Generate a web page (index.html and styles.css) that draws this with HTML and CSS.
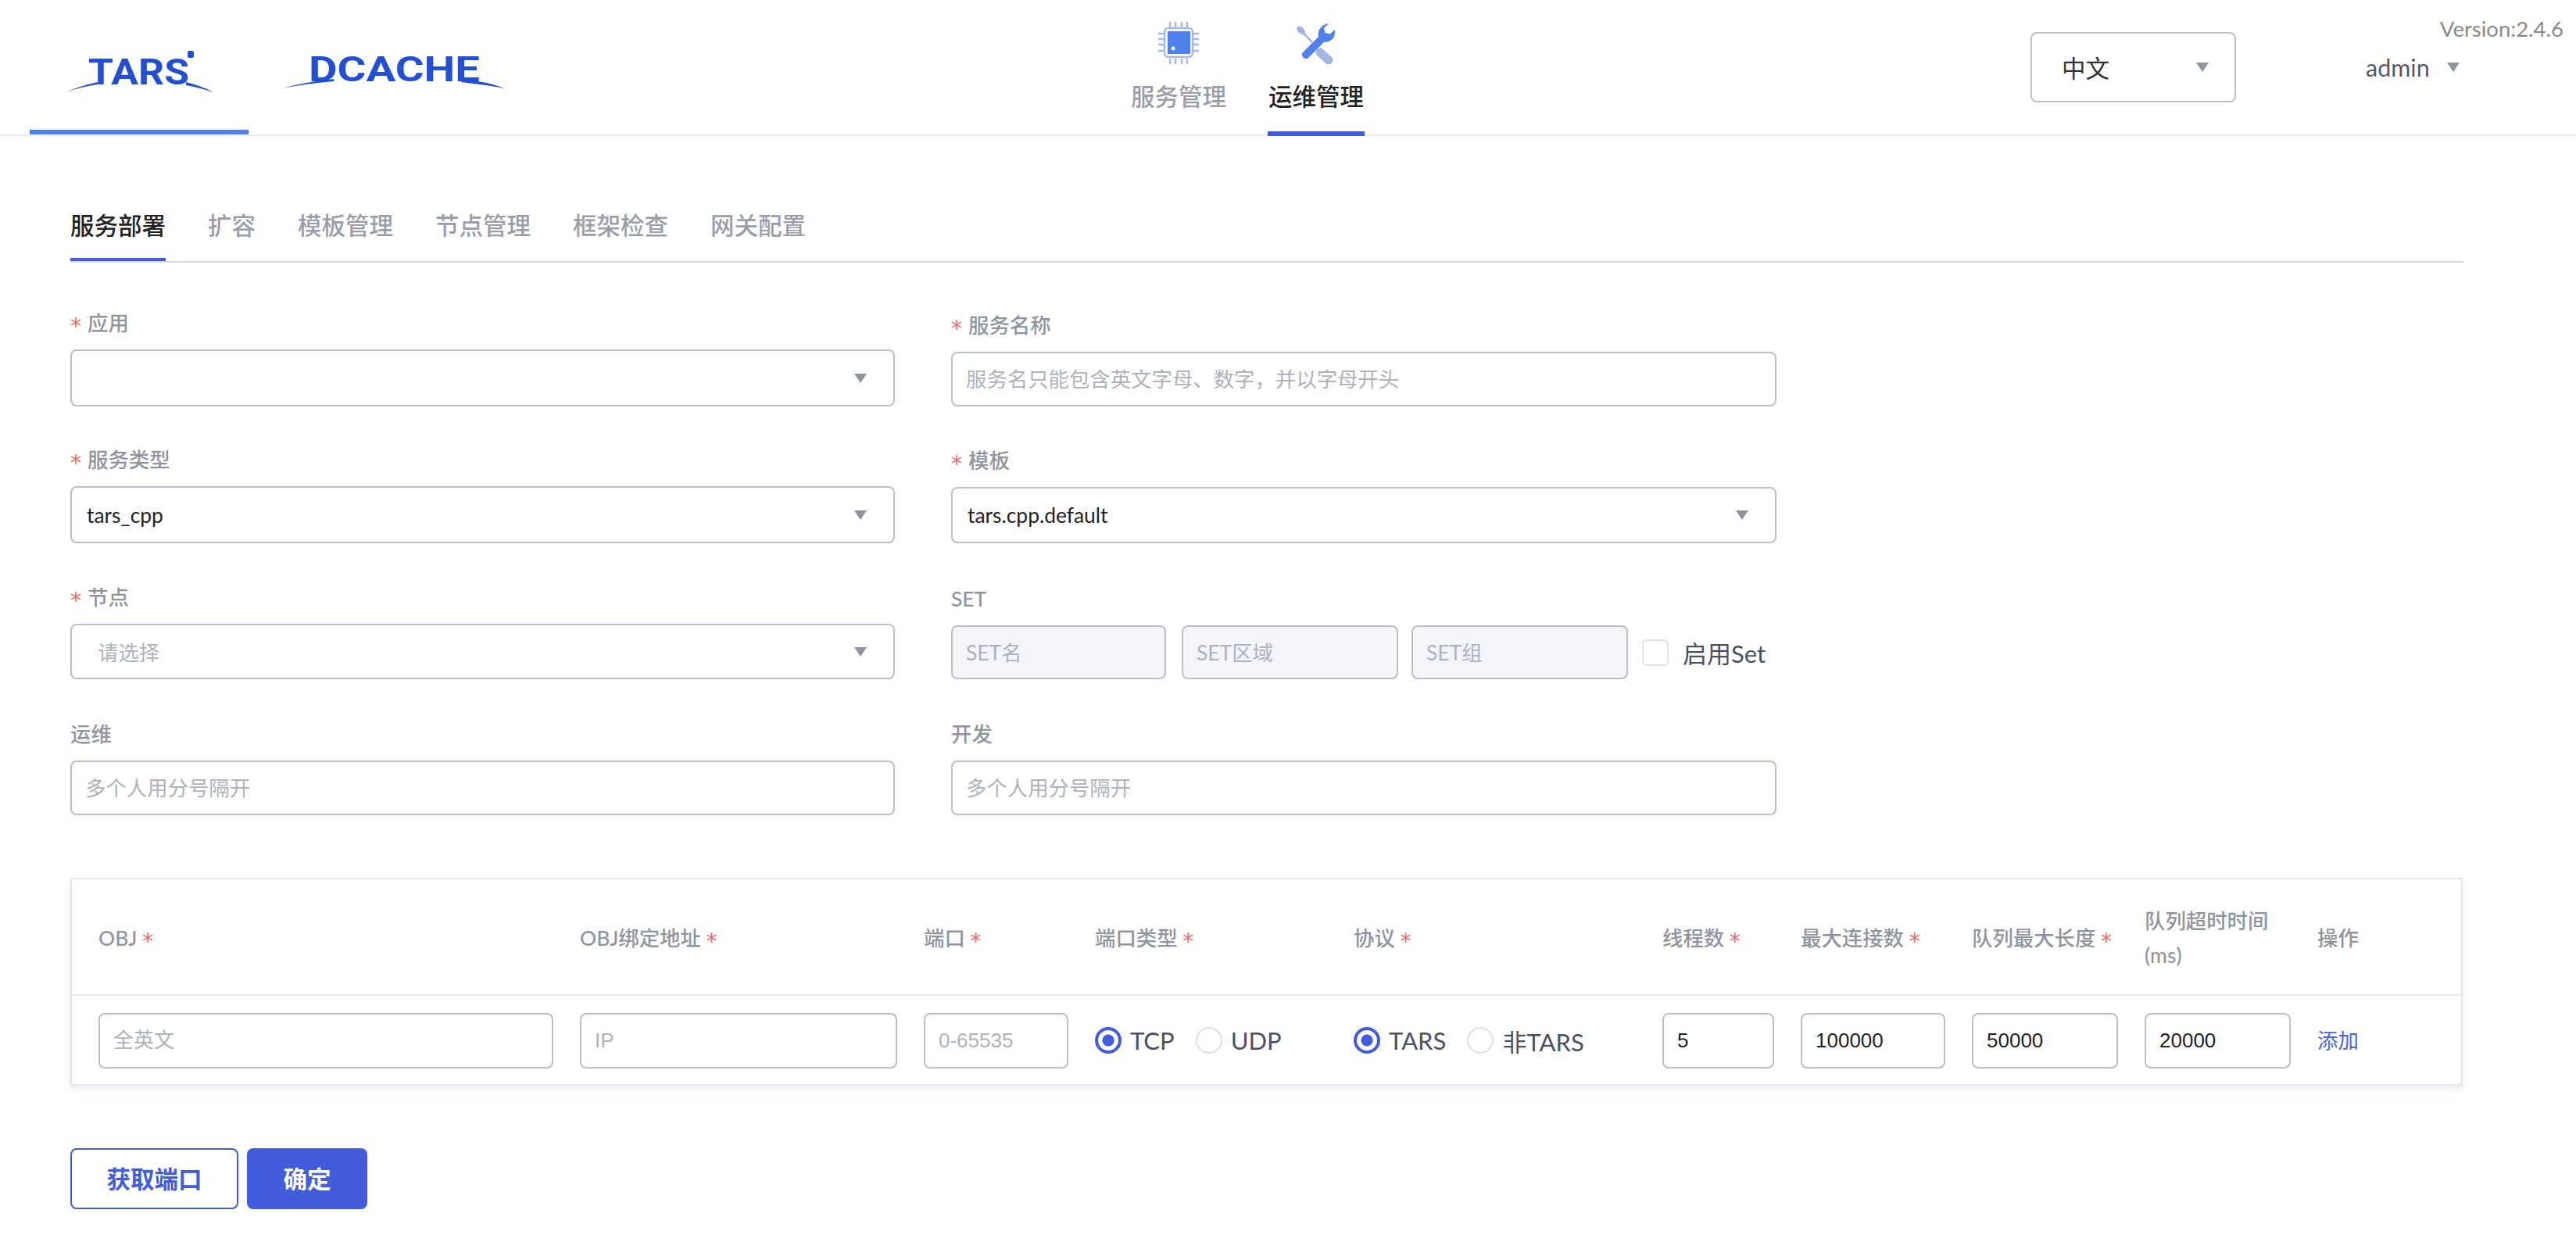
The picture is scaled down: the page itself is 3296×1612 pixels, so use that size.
FILE: index.html
```html
<!DOCTYPE html>
<html lang="zh-CN">

<head>
    <meta charset="UTF-8">
    <title>TARS</title>
    <link rel="stylesheet" href="styles.css">
</head>

<body>
    <header class="top-bar">
        <div class="logos">
            <a class="logo-tab active">
                <svg class="logo" width="280" height="70" viewBox="0 0 280 70">
                    <text class="logo-word" x="75" y="48" font-size="46" textLength="129" lengthAdjust="spacingAndGlyphs">TARS</text>
                    <rect class="logo-mark" x="202" y="5" width="8" height="9" rx="2"></rect>
                    <path class="logo-mark" d="M46 58 Q64 50 87 45 L87 48 Q66 51 46 58Z"></path>
                    <path class="logo-mark" d="M200 45 Q220 50 235 58 Q216 52 200 49Z"></path>
                </svg>
            </a>
            <a class="logo-tab second">
                <svg class="logo" width="295" height="70" viewBox="0 0 295 70">
                    <text class="logo-word" x="40" y="44" font-size="45" textLength="219" lengthAdjust="spacingAndGlyphs">DCACHE</text>
                    <path class="logo-mark" d="M7 53 Q34 45 72 41 L72 44 Q36 47 7 53Z"></path>
                    <path class="logo-mark" d="M235 41 Q266 44 291 53 Q262 48 235 45Z"></path>
                </svg>
            </a>
        </div>

        <nav class="main-nav">
            <a class="nav-item">
                <svg width="52" height="54" viewBox="0 0 52 54">
                    <g class="pin">
                        <path d="M15 0V7M22 0V7M30 0V7M37 0V7M15 47V54M22 47V54M30 47V54M37 47V54"></path>
                        <path d="M0 15H7M0 22H7M0 29H7M0 37H7M45 15H52M45 22H52M45 29H52M45 37H52"></path>
                        <rect x="8" y="8" width="36" height="37" rx="5"></rect>
                    </g>
                    <rect class="chip-core" x="12" y="12" width="29" height="29"></rect>
                    <circle cx="19" cy="34" r="2.5" fill="#fff"></circle>
                </svg>
                <span>服务管理</span>
            </a>
            <a class="nav-item active">
                <svg width="52" height="54" viewBox="0 0 52 54">
                    <ellipse class="tool-light" cx="6.7" cy="11" rx="6.5" ry="4" transform="rotate(45 6.7 11)"></ellipse>
                    <path class="tool-shaft" d="M9 14L21 26"></path>
                    <path class="tool-handle" d="M31 39L42 49"></path>
                    <path class="tool-main" d="M42 2L36 8L37.5 14L43.5 15.5L50 10C51 17 48 23 42 25C40 26 38 26 36.5 25.5L16 46A5 5 0 0 1 9 39L29 19C27 11 33 3 42 2Z"></path>
                </svg>
                <span>运维管理</span>
            </a>
        </nav>

        <div class="lang-select">
            <span>中文</span>
            <i class="caret"></i>
        </div>

        <div class="user-menu">
            <span>admin</span>
            <i class="caret"></i>
        </div>

        <div class="version">Version:2.4.6</div>
    </header>

    <main class="content">
        <div class="tabs">
            <a class="tab active">服务部署</a>
            <a class="tab">扩容</a>
            <a class="tab">模板管理</a>
            <a class="tab">节点管理</a>
            <a class="tab">框架检查</a>
            <a class="tab">网关配置</a>
        </div>

        <form class="deploy-form">
            <div class="field">
                <label class="field-label"><em>*</em>应用</label>
                <div class="select-box"><span></span><i class="caret"></i></div>
            </div>
            <div class="field">
                <label class="field-label"><em>*</em>服务名称</label>
                <input class="text-input" placeholder="服务名只能包含英文字母、数字，并以字母开头">
            </div>

            <div class="field">
                <label class="field-label"><em>*</em>服务类型</label>
                <div class="select-box"><span>tars_cpp</span><i class="caret"></i></div>
            </div>
            <div class="field">
                <label class="field-label"><em>*</em>模板</label>
                <div class="select-box tight"><span>tars.cpp.default</span><i class="caret"></i></div>
            </div>

            <div class="field">
                <label class="field-label"><em>*</em>节点</label>
                <div class="select-box short">
                    <span class="select-placeholder">请选择</span><i class="caret"></i>
                </div>
            </div>
            <div class="field">
                <label class="field-label">SET</label>
                <div class="set-row">
                    <input class="text-input set-input name" placeholder="SET名" disabled>
                    <input class="text-input set-input area" placeholder="SET区域" disabled>
                    <input class="text-input set-input group" placeholder="SET组" disabled>
                    <span class="check-box"></span>
                    <span class="check-text">启用Set</span>
                </div>
            </div>

            <div class="field">
                <label class="field-label">运维</label>
                <input class="text-input" placeholder="多个人用分号隔开">
            </div>
            <div class="field">
                <label class="field-label">开发</label>
                <input class="text-input" placeholder="多个人用分号隔开">
            </div>
        </form>

        <div class="obj-card">
            <table class="obj-table">
                <thead>
                    <tr>
                        <th class="col-obj">OBJ <em>*</em></th>
                        <th class="col-bind">OBJ绑定地址 <em>*</em></th>
                        <th class="col-port">端口 <em>*</em></th>
                        <th class="col-type">端口类型 <em>*</em></th>
                        <th class="col-proto">协议 <em>*</em></th>
                        <th class="col-thread">线程数 <em>*</em></th>
                        <th class="col-conn">最大连接数 <em>*</em></th>
                        <th class="col-queue">队列最大长度 <em>*</em></th>
                        <th class="col-queue">队列超时时间 (ms)</th>
                        <th>操作</th>
                    </tr>
                </thead>
                <tbody>
                    <tr>
                        <td><input class="cell-input" placeholder="全英文"></td>
                        <td><input class="cell-input" placeholder="IP"></td>
                        <td><input class="cell-input" placeholder="0-65535"></td>
                        <td>
                            <div class="radio-group">
                                <span class="radio on"></span><span class="radio-text">TCP</span>
                                <span class="radio"></span><span class="radio-text">UDP</span>
                            </div>
                        </td>
                        <td>
                            <div class="radio-group">
                                <span class="radio on"></span><span class="radio-text">TARS</span>
                                <span class="radio"></span><span class="radio-text">非TARS</span>
                            </div>
                        </td>
                        <td><input class="cell-input" value="5"></td>
                        <td><input class="cell-input" value="100000"></td>
                        <td><input class="cell-input" value="50000"></td>
                        <td><input class="cell-input" value="20000"></td>
                        <td><a class="add-link">添加</a></td>
                    </tr>
                </tbody>
            </table>
        </div>

        <div class="actions">
            <button class="btn btn-plain" type="button">获取端口</button>
            <button class="btn btn-primary" type="button">确定</button>
        </div>
    </main>
</body>

</html>
```

FILE: styles.css
```css
* {
    box-sizing: border-box;
}

body {
    margin: 0;
    background-color: #fff;
    color: #333;
    font-family: Lato, "Noto Sans CJK SC", sans-serif;
    font-size: 26.4px;
}

em {
    color: #ec6b6b;
    font-family: "DejaVu Sans", sans-serif;
    font-size: 28px;
    font-style: normal;
    font-weight: 400;
    line-height: 0;
    vertical-align: -4px;
}

/* 顶部导航 */
.top-bar {
    position: relative;
    display: flex;
    height: 174px;
    padding-left: 38px;
    border-bottom: 2px solid #ebedf0;
}

.logos {
    display: flex;
}

.logo-tab {
    display: block;
    width: 280px;
    height: 172px;
    padding-top: 60px;
}

.logo-tab.active {
    border-bottom: 6px solid #4f80ec;
}

.logo-tab.second {
    width: 295px;
    margin-left: 37px;
}

.logo {
    display: block;
}

.logo-word {
    fill: #2350d2;
    font-family: Roboto, sans-serif;
    font-weight: 700;
}

.logo-mark {
    fill: #2350d2;
}

.main-nav {
    display: flex;
    gap: 52px;
    margin-left: 796px;
    height: 174px;
}

.nav-item {
    display: flex;
    flex-direction: column;
    align-items: center;
    width: 124px;
    height: 174px;
    padding-top: 28px;
    color: #9a9eab;
    font-size: 30.5px;
    font-weight: 500;
}

.nav-item span {
    margin-top: 19px;
    line-height: 44px;
}

.nav-item.active {
    color: #222;
    border-bottom: 6px solid #415dd9;
}

.pin {
    fill: none;
    stroke: #a6b9e6;
    stroke-width: 2.5;
}

.chip-core {
    fill: #4f80ec;
}

.tool-light {
    fill: #a3b6e3;
}

.tool-shaft {
    stroke: #a3b6e3;
    stroke-width: 2.5;
}

.tool-handle {
    stroke: #a3b6e3;
    stroke-width: 11;
    stroke-linecap: round;
}

.tool-main {
    fill: #4f80ec;
}

.caret {
    display: block;
    width: 0;
    height: 0;
    border-left: 8px solid transparent;
    border-right: 8px solid transparent;
    border-top: 12px solid #8f93a0;
}

.lang-select {
    display: flex;
    align-items: center;
    justify-content: space-between;
    align-self: center;
    width: 263px;
    height: 90px;
    margin-left: 852px;
    padding: 0 33px 0 38px;
    border: 2px solid #bfc2cc;
    border-radius: 8px;
    color: #333;
    font-size: 30.5px;
}

.user-menu {
    display: flex;
    align-items: center;
    gap: 22px;
    align-self: center;
    margin-left: 166px;
    color: #555a68;
    font-size: 30.5px;
}

.version {
    position: absolute;
    top: 20px;
    right: 16px;
    color: #8a8a8a;
    font-size: 27.5px;
}

/* 内容区 */
.content {
    padding: 0 144px 0 90px;
}

.tabs {
    display: flex;
    gap: 54px;
    height: 162px;
    padding-top: 92px;
    border-bottom: 2px solid #d8dae0;
}

.tab {
    height: 68px;
    color: #9a9eab;
    font-size: 30.5px;
    font-weight: 500;
    line-height: 44px;
}

.tab.active {
    color: #222;
    border-bottom: 4px solid #415dd9;
}

.deploy-form {
    display: grid;
    grid-template-columns: 1055px 1056px;
    grid-template-rows: 184px 175px 174px 174px;
    column-gap: 72px;
    align-items: end;
}

.field-label {
    display: block;
    margin-bottom: 12px;
    color: #8f94a1;
    font-size: 26.4px;
    font-weight: 500;
    line-height: 44px;
}

.field-label em {
    margin-right: 8px;
}

.select-box {
    display: flex;
    align-items: center;
    justify-content: space-between;
    height: 73px;
    padding: 0 34px 0 19px;
    border: 2px solid #bcbfca;
    border-radius: 8px;
    color: #222;
}

.select-box.tight {
    height: 72px;
}

.select-box.short {
    height: 71px;
}

.select-placeholder {
    margin-left: 14px;
    color: #aeb2be;
}

.text-input {
    display: block;
    width: 100%;
    height: 70px;
    padding: 0 17px;
    border: 2px solid #bcbfca;
    border-radius: 8px;
    background-color: #fff;
    font-family: inherit;
    font-size: 26.4px;
    outline: none;
}

.text-input::placeholder,
.cell-input::placeholder {
    color: #aeb2be;
    opacity: 1;
}

.set-row {
    display: flex;
    align-items: center;
}

.set-input {
    height: 69px;
    background-color: #f4f5fa;
}

.set-input.name {
    width: 275px;
    margin-right: 20px;
}

.set-input.area {
    width: 277px;
    margin-right: 17px;
}

.set-input.group {
    width: 277px;
    margin-right: 18px;
}

.check-box {
    width: 34px;
    height: 34px;
    border: 2px solid #dfe1e8;
    border-radius: 6px;
}

.check-text {
    margin-left: 18px;
    color: #4a5060;
    font-size: 31px;
}

/* OBJ 表格 */
.obj-card {
    width: 3061px;
    margin-top: 80px;
    border: 2px solid #e6e7ec;
    box-shadow: 0 4px 8px rgba(60, 70, 100, 0.12);
}

.obj-table {
    width: 100%;
    border-collapse: collapse;
    table-layout: fixed;
}

.obj-table th {
    height: 148px;
    padding: 2px 17px 0;
    border-bottom: 2px solid #e6e7ec;
    color: #8f94a1;
    font-size: 26.4px;
    font-weight: 500;
    line-height: 44px;
    text-align: left;
}

.obj-table td {
    height: 114px;
    padding: 1px 17px 0;
}

.obj-table th:first-child,
.obj-table td:first-child {
    padding-left: 34px;
}

.col-obj { width: 633px; }
.col-bind { width: 440px; }
.col-port { width: 219px; }
.col-type { width: 331px; }
.col-proto { width: 395px; }
.col-thread { width: 177px; }
.col-conn { width: 219px; }
.col-queue { width: 221px; }

.cell-input {
    display: block;
    width: 100%;
    height: 71px;
    padding: 0 17px;
    border: 2px solid #bcbfca;
    border-radius: 8px;
    color: #222;
    font-family: "Liberation Sans", Arial, sans-serif;
    font-size: 26px;
    outline: none;
}

.radio-group {
    display: flex;
    align-items: center;
    white-space: nowrap;
}

.radio {
    display: block;
    flex: none;
    width: 34px;
    height: 34px;
    border: 2px solid #dfe1e8;
    border-radius: 50%;
}

.radio.on {
    border: 4px solid #415dd9;
    background: radial-gradient(circle, #415dd9 0, #415dd9 7px, #fff 8px);
}

.radio-text {
    margin: 0 27px 0 11px;
    color: #4a5066;
    font-size: 31px;
}

.add-link {
    display: block;
    margin-bottom: 4px;
    color: #4565e0;
}

/* 底部按钮 */
.actions {
    display: flex;
    gap: 11px;
    margin-top: 80px;
}

.btn {
    height: 78px;
    padding: 0 0 3px;
    border-radius: 8px;
    font-family: inherit;
    font-size: 30.5px;
    font-weight: 700;
}

.btn-plain {
    width: 215px;
    border: 2px solid #415dd9;
    background-color: #fff;
    color: #415dd9;
}

.btn-primary {
    width: 154px;
    border: none;
    background-color: #415dd9;
    color: #fff;
}
```
